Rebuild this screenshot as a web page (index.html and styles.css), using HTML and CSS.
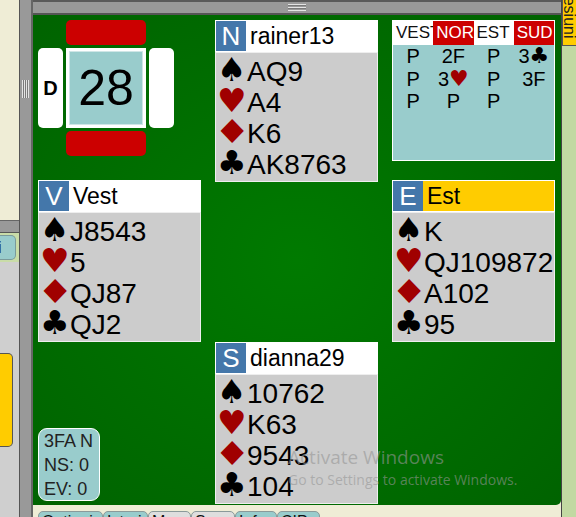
FILE: index.html
```html
<!DOCTYPE html>
<html>
<head>
<meta charset="utf-8">
<link rel="stylesheet" href="styles.css">
</head>
<body>
<div class="app">
  <div class="left">
    <div class="left-top"></div>
    <div class="left-sep"></div>
    <div class="left-tabs"><div class="itab">i</div></div>
    <div class="left-gray"><div class="ybox"></div></div>
  </div>
  <div class="vsplit"><div class="vgrip"></div></div>
  <div class="main">
    <div class="hsplit"><div class="hgrip"></div></div>
    <div class="table">
      <div class="compass">
        <div class="vul vul-top"></div>
        <div class="side side-left">D</div>
        <div class="board">28</div>
        <div class="side side-right"></div>
        <div class="vul vul-bottom"></div>
      </div>

      <div class="hand north">
        <div class="hname"><span class="seat">N</span><span class="nm">rainer13</span></div>
        <div class="cards">
          <div><span class="suit blk">♠</span>AQ9</div>
          <div><span class="suit red">♥</span>A4</div>
          <div><span class="suit red dia">♦</span>K6</div>
          <div><span class="suit blk">♣</span>AK8763</div>
        </div>
      </div>

      <div class="bids">
        <div class="bhead">
          <div>VEST</div><div class="hred">NORD</div><div>EST</div><div class="hred">SUD</div>
        </div>
        <div class="bbody">
          <div>P</div><div>2F</div><div>P</div><div>3<span class="bsuit blk">♣</span></div>
          <div>P</div><div>3<span class="bsuit red">♥</span></div><div>P</div><div>3F</div>
          <div>P</div><div>P</div><div>P</div><div></div>
        </div>
      </div>

      <div class="hand west">
        <div class="hname"><span class="seat">V</span><span class="nm">Vest</span></div>
        <div class="cards">
          <div><span class="suit blk">♠</span>J8543</div>
          <div><span class="suit red">♥</span>5</div>
          <div><span class="suit red dia">♦</span>QJ87</div>
          <div><span class="suit blk">♣</span>QJ2</div>
        </div>
      </div>

      <div class="hand east active">
        <div class="hname"><span class="seat">E</span><span class="nm">Est</span></div>
        <div class="cards">
          <div><span class="suit blk">♠</span>K</div>
          <div><span class="suit red">♥</span>QJ109872</div>
          <div><span class="suit red dia">♦</span>A102</div>
          <div><span class="suit blk">♣</span>95</div>
        </div>
      </div>

      <div class="contract">
        <div>3FA N</div>
        <div>NS: 0</div>
        <div>EV: 0</div>
      </div>

      <div class="hand south">
        <div class="hname"><span class="seat">S</span><span class="nm">dianna29</span></div>
        <div class="cards">
          <div><span class="suit blk">♠</span>10762</div>
          <div><span class="suit red">♥</span>K63</div>
          <div><span class="suit red dia">♦</span>9543</div>
          <div><span class="suit blk">♣</span>104</div>
        </div>
      </div>

      <div class="watermark">
        <div class="wm1">Activate Windows</div>
        <div class="wm2">Go to Settings to activate Windows.</div>
      </div>
    </div>
    <div class="tabs">
      <div class="tab blue w1">Optiuni</div>
      <div class="tab blue w2">Istoric</div>
      <div class="tab grey w3">Mana</div>
      <div class="tab grey w4">Scor</div>
      <div class="tab blue w5">Info</div>
      <div class="tab blue w6">CIP</div>
    </div>
  </div>
  <div class="right">
    <div class="rtab"><span>Sesiuni</span></div>
  </div>
</div>
</body>
</html>
```

FILE: styles.css
```css
html, body {
  margin: 0;
  padding: 0;
}
body {
  width: 576px;
  height: 517px;
  overflow: hidden;
  font-family: "Liberation Sans", Arial, sans-serif;
  background: #efedd6;
}
.app {
  display: flex;
  width: 576px;
  height: 517px;
  overflow: hidden;
}

/* left panel */
.left {
  width: 19px;
  border-right: 1px solid #555;
  display: flex;
  flex-direction: column;
  flex: none;
}
.left-top {
  height: 220px;
  background: #efedd6;
  border-bottom: 1px solid #666;
}
.left-sep {
  height: 11px;
  background: #999;
  border-bottom: 1px solid #555;
}
.left-tabs {
  height: 27px;
  background: #c9dca8;
  padding-top: 2px;
}
.itab {
  width: 15px;
  height: 23px;
  background: #99cccc;
  border: 1px solid #7a9a9a;
  border-left: none;
  border-radius: 0 5px 5px 0;
  font-size: 16px;
  line-height: 23px;
  text-indent: -2px;
  overflow: hidden;
  color: #222;
}
.left-gray {
  flex: 1;
  background: #cfcfcf;
  padding-top: 91px;
}
.ybox {
  width: 12px;
  height: 92px;
  background: #ffcc00;
  border: 1px solid #555;
  border-left: none;
  border-radius: 0 5px 5px 0;
}

/* vertical splitter */
.vsplit {
  width: 11px;
  background: #999;
  border-right: 2px solid #666;
  flex: none;
}
.vgrip {
  margin: 80px 0 0 2px;
  width: 7px;
  height: 18px;
  background: repeating-linear-gradient(90deg, #e4e4e4 0 1px, #7a7a7a 1px 2px);
}

/* main */
.main {
  width: 528px;
  border-right: 1px solid #444;
  display: flex;
  flex-direction: column;
  flex: none;
}
.hsplit {
  height: 11px;
  background: #999;
  border-top: 2px solid #5a5a5a;
  border-bottom: 2px solid #555;
  display: flex;
  justify-content: center;
  align-items: center;
}
.hgrip {
  width: 18px;
  height: 7px;
  background: repeating-linear-gradient(180deg, #e4e4e4 0 1px, #7a7a7a 1px 2px, #999 2px 3px);
}

.table {
  position: relative;
  height: 490px;
  box-sizing: border-box;
  padding: 5px 0 0 5px;
  background: radial-gradient(ellipse at 50% 50%, #007a00 0%, #006d00 55%, #006300 100%);
  border-bottom-right-radius: 5px;
  display: grid;
  grid-template-columns: 163px 163px 163px;
  grid-template-rows: 160px 162px 163px;
  column-gap: 14px;
  align-items: start;
}

/* compass */
.compass {
  grid-column: 1;
  grid-row: 1;
  display: grid;
  grid-template-columns: 25px 80px 25px;
  grid-template-rows: 25px 80px 25px;
  gap: 3px;
}
.vul {
  background: #cc0000;
  border-radius: 5px;
}
.vul-top { grid-column: 2; grid-row: 1; }
.vul-bottom { grid-column: 2; grid-row: 3; }
.side {
  grid-row: 2;
  background: #fff;
  border-radius: 5px;
  display: flex;
  align-items: center;
  justify-content: center;
  font-weight: bold;
  font-size: 20px;
  color: #000;
}
.side-left { grid-column: 1; }
.side-right { grid-column: 3; }
.board {
  grid-column: 2;
  grid-row: 2;
  background: #99cccc;
  border: 3px solid #fff;
  box-shadow: inset 0 0 0 1px #cfe6e6;
  display: flex;
  align-items: center;
  justify-content: center;
  font-size: 50px;
  color: #000;
}

/* hands */
.hand {
  display: flex;
  flex-direction: column;
}
.north { grid-column: 2; grid-row: 1; }
.west { grid-column: 1; grid-row: 2; }
.east { grid-column: 3; grid-row: 2; }
.south { grid-column: 2; grid-row: 3; }

.hname {
  height: 32px;
  box-sizing: border-box;
  border: 1px solid #fff;
  background: #fff;
  display: flex;
  align-items: center;
  font-size: 23px;
  color: #000;
}
.active .hname {
  background: #ffcc00;
}
.seat {
  width: 30px;
  align-self: stretch;
  background: #4477aa;
  color: #fff;
  font-size: 26px;
  display: flex;
  align-items: center;
  justify-content: center;
}
.nm {
  padding-left: 4px;
}
.cards {
  height: 130px;
  box-sizing: border-box;
  border: 1px solid #eee;
  background: #cccccc;
  padding: 3px 0 0 5px;
  font-size: 28px;
  line-height: 31px;
  color: #000;
  white-space: nowrap;
}
.suit {
  display: inline-block;
  width: 30px;
  margin-left: -4px;
  font-family: "DejaVu Sans", sans-serif;
  font-size: 33px;
  line-height: 10px;
}
.suit.dia {
  transform: scaleX(1.25);
  transform-origin: 13px 50%;
}
.blk { color: #000; }
.red { color: #a00000; }

/* bidding */
.bids {
  grid-column: 3;
  grid-row: 1;
  height: 141px;
  box-sizing: border-box;
  border: 1px solid #fff;
  background: #99cccc;
}
.bhead {
  display: grid;
  grid-template-columns: repeat(4, 1fr);
  height: 24px;
  line-height: 24px;
  font-size: 17px;
}
.bhead div {
  overflow: hidden;
  white-space: nowrap;
  padding-left: 3px;
  background: #fff;
  color: #111;
}
.bhead .hred {
  background: #cc0000;
  color: #fff;
}
.bbody {
  display: grid;
  grid-template-columns: repeat(4, 1fr);
  font-size: 20px;
  line-height: 22.5px;
  text-align: center;
  color: #000;
}
.bsuit {
  font-family: "DejaVu Sans", sans-serif;
  font-size: 22px;
  line-height: 10px;
}

/* contract */
.contract {
  grid-column: 1;
  grid-row: 3;
  align-self: end;
  margin-bottom: 4px;
  width: 62px;
  height: 73px;
  box-sizing: border-box;
  border: 1px solid #fff;
  border-radius: 9px;
  background: #99cccc;
  padding: 0 0 0 5px;
  font-size: 18px;
  line-height: 24px;
  color: #222;
  white-space: nowrap;
}

/* watermark */
.watermark {
  position: absolute;
  left: 255px;
  top: 429px;
  color: rgba(150, 150, 150, 0.6);
  font-family: "Open Sans", sans-serif;
  pointer-events: none;
}
.wm1 {
  font-size: 19px;
  line-height: 26px;
}
.wm2 {
  font-size: 14px;
  line-height: 20px;
}

/* bottom tabs */
.tabs {
  flex: 1;
  background: #efedd6;
  display: flex;
  padding: 6px 0 0 5px;
  overflow: hidden;
}
.tab {
  height: 20px;
  box-sizing: border-box;
  border: 1px solid #8a9a9a;
  border-radius: 5px 5px 0 0;
  font-size: 16px;
  line-height: 20px;
  padding-left: 3px;
  overflow: hidden;
  white-space: nowrap;
  color: #111;
  flex: none;
}
.blue { background: #99cccc; }
.grey { background: #dedede; }
.w1 { width: 65px; }
.w2 { width: 45px; }
.w3 { width: 43px; }
.w4 { width: 44px; }
.w5 { width: 42px; }
.w6 { width: 43px; }

/* right */
.right {
  flex: 1;
  background: #c2d9a2;
}
.rtab {
  height: 46px;
  box-sizing: border-box;
  background: #ffcc00;
  border-bottom: 1px solid #555;
  border-left: 1px solid #555;
  overflow: hidden;
  writing-mode: vertical-rl;
  font-size: 16px;
  line-height: 13px;
  color: #222;
}
.rtab span {
  display: block;
  margin-top: -14px;
}
```
